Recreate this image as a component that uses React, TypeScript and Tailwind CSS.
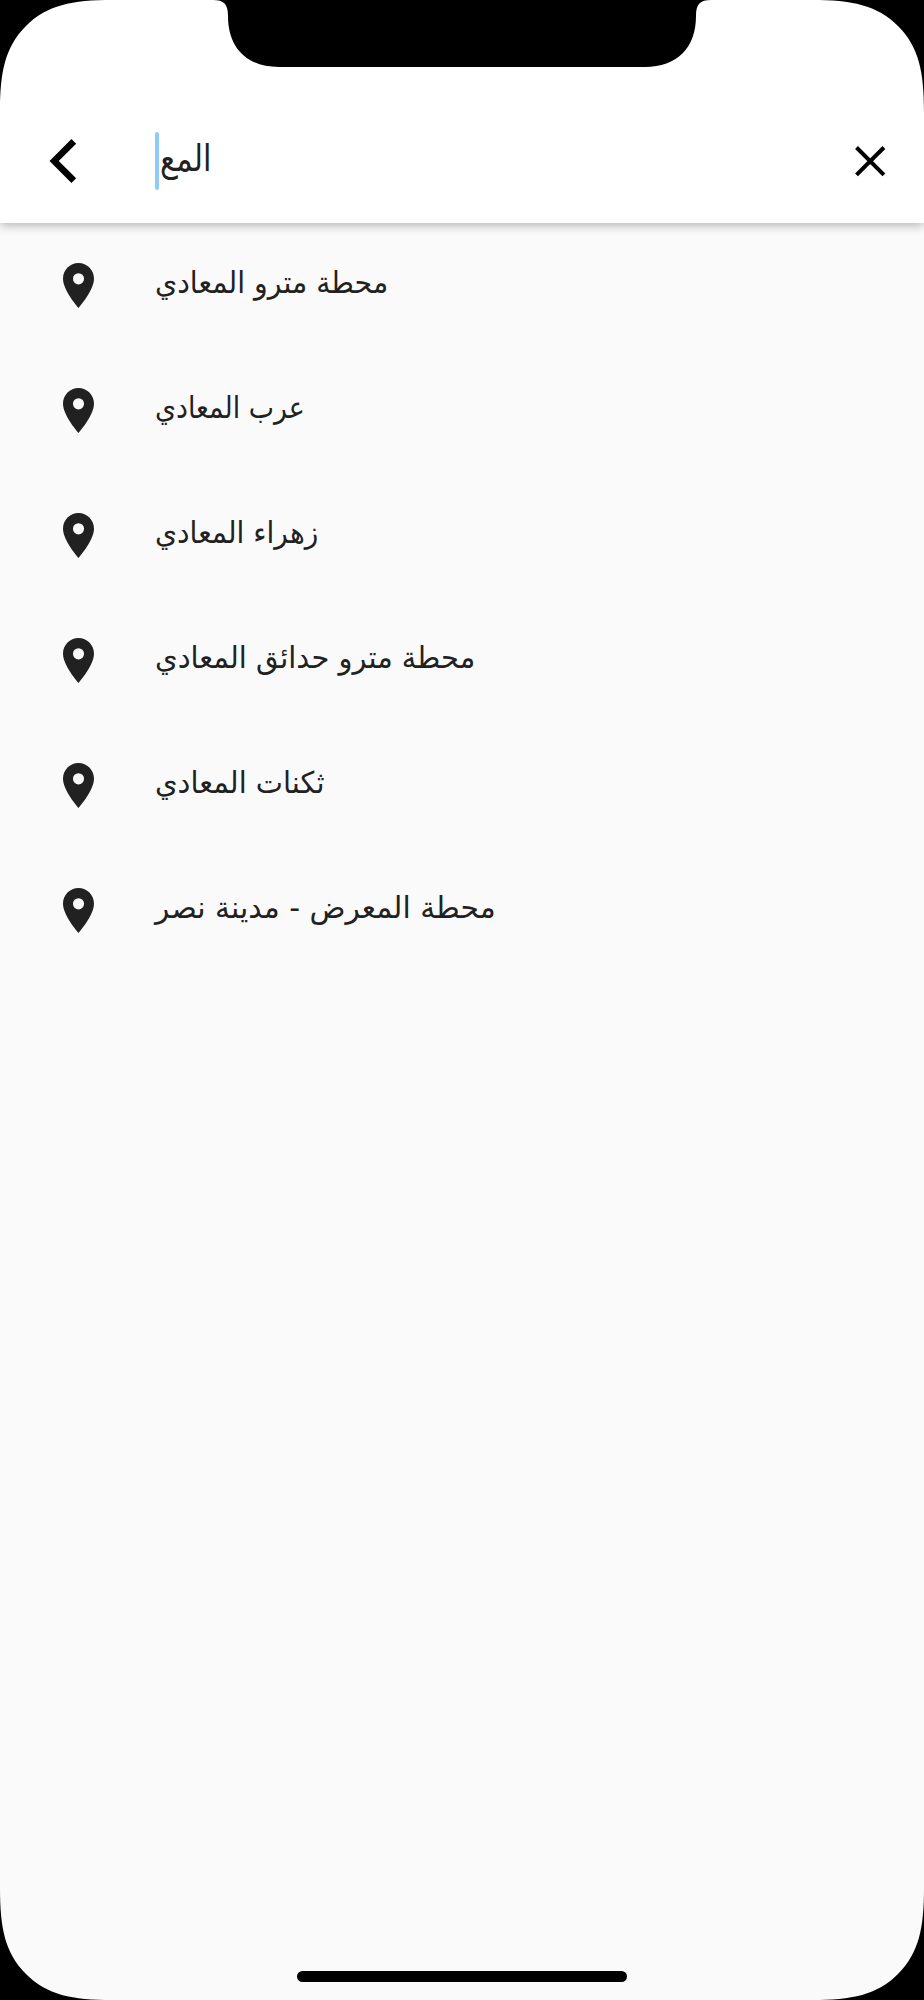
const stations = [
  { name: "محطة مترو المعادي", scale: "scale-x-[.945]" },
  { name: "عرب المعادي", scale: "scale-x-[.894]" },
  { name: "زهراء المعادي", scale: "scale-x-[.938]" },
  { name: "محطة مترو حدائق المعادي", scale: "scale-x-[.964]" },
  { name: "ثكنات المعادي", scale: "scale-x-[.962]" },
  { name: "محطة المعرض - مدينة نصر", scale: "scale-x-[.992]" },
];

function Pin() {
  return (
    <svg className="ml-[62.7px] h-[45px] w-[31px] shrink-0" viewBox="0 0 14 20" preserveAspectRatio="none" fill="#212121">
      <path d="M7 0C3.13 0 0 3.13 0 7c0 5.25 7 13 7 13s7-7.75 7-13c0-3.87-3.13-7-7-7zm0 9.5a2.5 2.5 0 1 1 0-5 2.5 2.5 0 0 1 0 5z" />
    </svg>
  );
}

function DeviceFrame() {
  return (
    <svg className="pointer-events-none absolute inset-0 z-20 h-full w-full" viewBox="0 0 924 2000">
      <path d="M0 0H112C72 0 47 5 26 26S0 72 0 112Z" />
      <path d="M924 0H812C852 0 877 5 898 26S924 72 924 112Z" />
      <path d="M0 2000H112C72 2000 47 1995 26 1974S0 1928 0 1888Z" />
      <path d="M924 2000H812C852 2000 877 1995 898 1974S924 1928 924 1888Z" />
      <path d="M213 0C224 0 228 4 228 16C228 48 247 67 279 67H645C677 67 696 48 696 16C696 4 700 0 711 0Z" />
      <rect x="297" y="1971" width="330" height="11" rx="5.5" />
    </svg>
  );
}

export default function App() {
  return (
    <div className="relative flex h-[2000px] w-[924px] flex-col overflow-hidden bg-[#fafafa] font-['DejaVu_Sans',sans-serif] text-[#212121]">
      <header className="z-10 flex h-[223px] shrink-0 bg-white pt-[98px] shadow-[0_2px_10px_rgba(0,0,0,0.3)]">
        <div className="flex h-[125px] w-full items-center">
          <svg className="ml-[50px] h-[44px] w-[26px] shrink-0 overflow-visible" viewBox="0 0 26 44" fill="none" stroke="#000" strokeWidth="6.6">
            <path d="M23.8 2.3 4.2 22 23.8 41.7" />
          </svg>
          <div className="ml-[79px] h-[58px] w-[4px] rounded-full bg-[#90caf9]" />
          <div dir="rtl" className="ml-[1px] origin-left scale-x-[.82] whitespace-nowrap pb-[3px] text-[37px] leading-[60px]">المع</div>
          <svg className="mr-[38px] ml-auto h-[32px] w-[32px] shrink-0" viewBox="0 0 32 32" fill="none" stroke="#000" strokeWidth="4">
            <path d="m2.5 2.5 27.4 27.4m0-27.4L2.5 29.9" />
          </svg>
        </div>
      </header>
      <ul className="flex flex-col">
        {stations.map((station) => (
          <li key={station.name} className="flex h-[125px] items-center">
            <Pin />
            <span dir="rtl" className={`ml-[61.3px] origin-left whitespace-nowrap pb-[5px] text-[30px] leading-[40px] ${station.scale}`}>
              {station.name}
            </span>
          </li>
        ))}
      </ul>
      <DeviceFrame />
    </div>
  );
}
